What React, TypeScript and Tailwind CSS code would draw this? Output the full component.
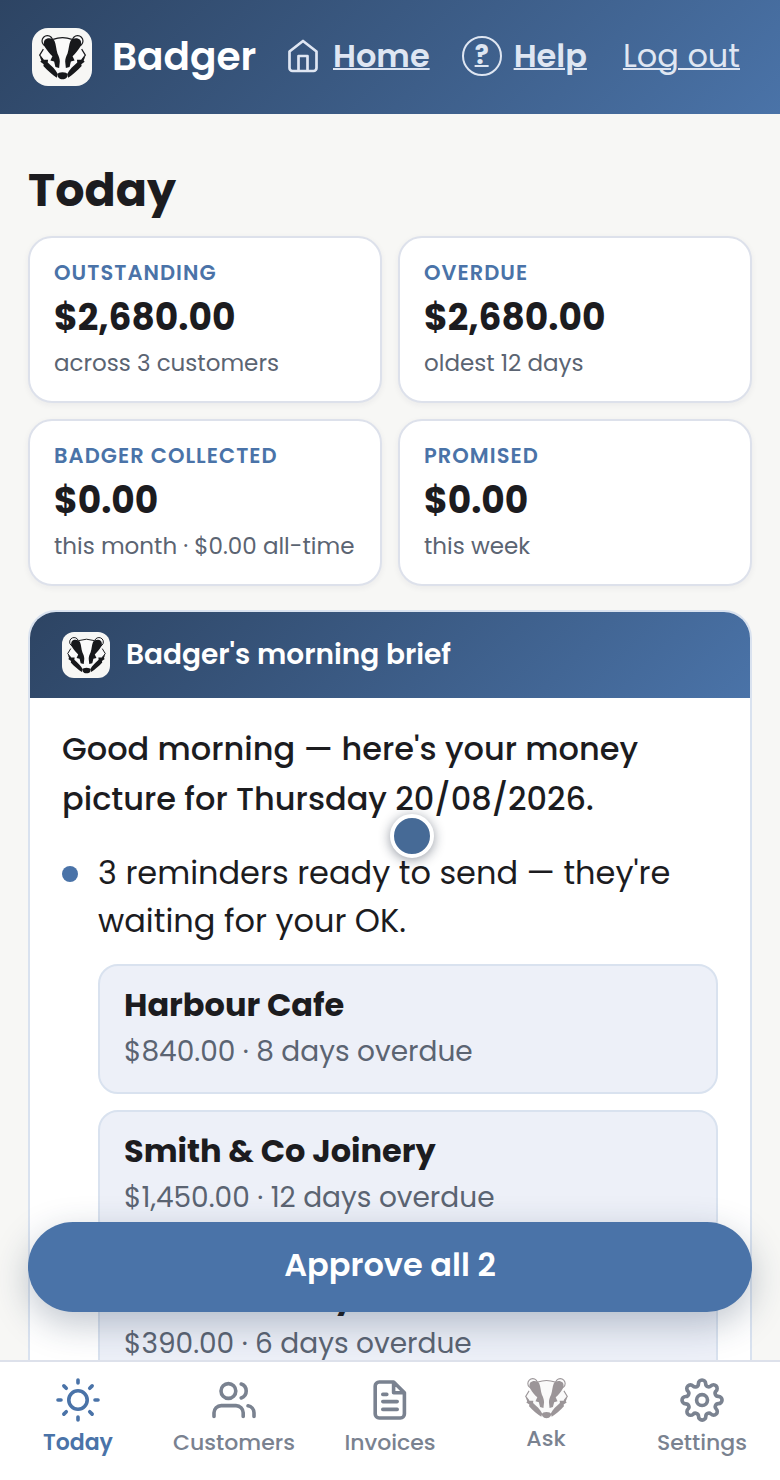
import React from "react";

type IconProps = { className?: string };

function BadgerFace({ className, ink = "#17181b" }: IconProps & { ink?: string }) {
  const half = (
    <>
      <circle cx="25" cy="18" r="16" fill="#fafafa" stroke={ink} strokeWidth="3.5" />
      <path d="M17 15C24 7 40 8 46 17c5 11 5 26 9 38 4 8 7 16 7 24l-2 19-11-3-4-16-11-3 6-13C32 56 24 46 19 38 13 30 13 21 17 15z" fill={ink} />
      <path d="M13 42L2 60l10 13" fill="none" stroke={ink} strokeWidth="3.5" />
      <path d="M2 64l13 10 12 0-1 8c12 11 23 20 30 34l-3 11C42 119 24 105 13 92l1-5-10-7 3-4z" fill={ink} />
    </>
  );
  return (
    <svg viewBox="0 0 140 134" className={className} aria-hidden="true">
      <path d="M13 42L25 18 44 14q26-10 52 0l19 4 12 24 11 18-12 16-46 52h-20L14 76 2 60z" fill="#fafafa" />
      {half}
      <g transform="translate(140 0) scale(-1 1)">{half}</g>
      <path d="M42 13q28-10 56 0" fill="none" stroke={ink} strokeWidth="3.5" />
      <path d="M55 118q2-7 15-7t15 7q1 9-7 12-8 3-16 0-8-4-7-12z" fill={ink} />
    </svg>
  );
}

function Line({ className, children }: IconProps & { children: React.ReactNode }) {
  return (
    <svg viewBox="0 0 24 24" fill="none" stroke="currentColor" strokeWidth="1.8" strokeLinecap="round" strokeLinejoin="round" className={className} aria-hidden="true">
      {children}
    </svg>
  );
}

const navItems = [
  {
    label: "Today",
    icon: (
      <Line className="size-12">
        <circle cx="12" cy="12" r="4.6" />
        <path d="M12 2v1.5M12 20.5V22M2 12h1.5M20.5 12H22M4.93 4.93l1.2 1.2M17.87 17.87l1.2 1.2M4.93 19.07l1.2-1.2M17.87 6.13l1.2-1.2" />
      </Line>
    ),
  },
  {
    label: "Customers",
    icon: (
      <Line className="size-12">
        <circle cx="9.2" cy="7.5" r="3.7" />
        <path d="M2 20.2v-1.8a3.6 3.6 0 0 1 3.6-3.6h7.4a3.6 3.6 0 0 1 3.6 3.6v1.8M15.6 4a3.7 3.7 0 0 1 0 7M19 14.9a3.6 3.6 0 0 1 3 3.5v1.8" />
      </Line>
    ),
  },
  {
    label: "Invoices",
    icon: (
      <Line className="size-12">
        <path d="M13.8 3H6.6a2 2 0 0 0-2 2v14a2 2 0 0 0 2 2h10.6a2 2 0 0 0 2-2V8.4zM13.8 3v5.4h5.4M8.4 9.2h2M8.4 12.8h7.2M8.4 16.7h7.2" />
      </Line>
    ),
  },
  { label: "Ask", icon: <BadgerFace className="h-[41px] w-[43px]" ink="#9b9598" /> },
  {
    label: "Settings",
    icon: (
      <Line className="size-12">
        <g transform="translate(1.1 1.1) scale(0.91)" strokeWidth="2">
          <circle cx="12" cy="12" r="3" />
          <path d="M19.4 15a1.65 1.65 0 0 0 .33 1.82l.06.06a2 2 0 0 1 0 2.83 2 2 0 0 1-2.83 0l-.06-.06a1.65 1.65 0 0 0-1.82-.33 1.65 1.65 0 0 0-1 1.51V21a2 2 0 0 1-2 2 2 2 0 0 1-2-2v-.09A1.65 1.65 0 0 0 9 19.4a1.65 1.65 0 0 0-1.82.33l-.06.06a2 2 0 0 1-2.83 0 2 2 0 0 1 0-2.83l.06-.06a1.65 1.65 0 0 0 .33-1.82 1.65 1.65 0 0 0-1.51-1H3a2 2 0 0 1-2-2 2 2 0 0 1 2-2h.09A1.65 1.65 0 0 0 4.6 9a1.65 1.65 0 0 0-.33-1.82l-.06-.06a2 2 0 0 1 0-2.83 2 2 0 0 1 2.83 0l.06.06a1.65 1.65 0 0 0 1.82.33H9a1.65 1.65 0 0 0 1-1.51V3a2 2 0 0 1 2-2 2 2 0 0 1 2 2v.09a1.65 1.65 0 0 0 1 1.51 1.65 1.65 0 0 0 1.82-.33l.06-.06a2 2 0 0 1 2.83 0 2 2 0 0 1 0 2.83l-.06.06a1.65 1.65 0 0 0-.33 1.82V9a1.65 1.65 0 0 0 1.51 1H21a2 2 0 0 1 2 2 2 2 0 0 1-2 2h-.09a1.65 1.65 0 0 0-1.51 1z" />
        </g>
      </Line>
    ),
  },
];

const stats = [
  { label: "Outstanding", value: "$2,680.00", note: "across 3 customers" },
  { label: "Overdue", value: "$2,680.00", note: "oldest 12 days" },
  { label: "Badger collected", value: "$0.00", note: "this month · $0.00 all-time" },
  { label: "Promised", value: "$0.00", note: "this week" },
];

const reminders = [
  { name: "Harbour Cafe", detail: "$840.00 · 8 days overdue" },
  { name: "Smith & Co Joinery", detail: "$1,450.00 · 12 days overdue" },
  { name: "Ocean Bakery", detail: "$390.00 · 6 days overdue" },
];

export default function App() {
  return (
    <div className="relative flex h-screen flex-col overflow-hidden bg-[#f7f7f5] font-[Poppins,Inter,sans-serif] text-[#1c1c1f]">
      <header className="flex shrink-0 items-center bg-linear-135 from-[#2d4463] to-[#4a73a8] py-7 pr-10 pl-8 text-[32px] leading-[54px] whitespace-nowrap text-[#dfe6f2]">
        <span className="flex h-[58px] w-[60px] shrink-0 items-center justify-center rounded-2xl bg-[#f7f7f5]">
          <BadgerFace className="h-[45px] w-[47px]" />
        </span>
        <span className="ml-5 text-[39px] font-semibold text-white">Badger</span>
        <nav className="ml-auto flex items-center gap-8 pb-0.5">
          <a href="#home" className="flex items-center gap-3 font-semibold">
            <Line className="size-9">
              <path d="M3 9l9-7 9 7v11a2 2 0 0 1-2 2H5a2 2 0 0 1-2-2zM9 22V12h6v10" />
            </Line>
            <span className="underline decoration-2">Home</span>
          </a>
          <a href="#help" className="flex items-center gap-3 font-semibold">
            <span className="flex size-10 items-center justify-center rounded-full border-2 border-[#dfe6f2] pb-0.5 text-[26px] leading-9 font-bold underline decoration-2">?</span>
            <span className="underline decoration-2">Help</span>
          </a>
          <a href="#logout" className="ml-1 underline decoration-2">Log out</a>
        </nav>
      </header>

      <main className="min-h-0 flex-1 overflow-y-auto px-7 pt-11 [scrollbar-width:none]">
        <h1 className="text-[46px] leading-[64px] font-bold">Today</h1>
        <section className="mt-[14px] grid grid-cols-2 gap-4">
          {stats.map((s) => (
            <div key={s.label} className="rounded-3xl border-2 border-[#dde1eb] bg-white px-6 pt-[18px] pb-[21px] shadow-[0_2px_6px_rgba(30,40,60,0.06)]">
              <div className="text-[21px] leading-[34px] font-semibold tracking-wider text-[#4a73a8] uppercase">{s.label}</div>
              <div className="text-[36px] leading-[56px] font-bold">{s.value}</div>
              <div className="text-[23px] leading-[34px] whitespace-nowrap text-[#5b6472]">{s.note}</div>
            </div>
          ))}
        </section>

        <section className="mt-6 rounded-[28px] border-2 border-[#d9e2ef] bg-white">
          <h2 className="flex items-center gap-4 rounded-t-[26px] bg-linear-135 from-[#2d4463] to-[#4a73a8] px-8 py-5 text-[28px] leading-[46px] font-semibold text-white">
            <span className="flex h-[46px] w-12 items-center justify-center rounded-xl bg-[#f7f7f5]">
              <BadgerFace className="h-[37px] w-[39px]" />
            </span>
            Badger's morning brief
          </h2>
          <div className="px-8 pt-[26px] pb-8">
            <p className="text-[32px] leading-[50px] font-medium">Good morning — here's your money picture for Thursday 20/08/2026.</p>
            <div className="mt-[25px] flex gap-5">
              <span className="mt-[17px] size-4 shrink-0 rounded-full bg-[#4a73a8]" />
              <div className="min-w-0 flex-1">
                <p className="text-[32px] leading-[48px]">3 reminders ready to send — they're waiting for your OK.</p>
                <ul className="mt-[19px] flex flex-col gap-4">
                  {reminders.map((r) => (
                    <li key={r.name} className="rounded-[20px] border-2 border-[#d9e2ef] bg-[#edf0f8] px-6 pt-[15px] pb-[18px]">
                      <div className="text-[32px] leading-[48px] font-bold">{r.name}</div>
                      <div className="text-[28px] leading-[45px] text-[#5b6472]">{r.detail}</div>
                    </li>
                  ))}
                </ul>
              </div>
            </div>
          </div>
        </section>
      </main>

      <div className="absolute right-7 bottom-[168px] left-7">
        <button type="button" className="w-full rounded-full bg-[#4a73a8] pt-[19px] pb-[23px] text-[32px] leading-[48px] font-semibold text-white shadow-[0_12px_36px_rgba(30,50,80,0.28)]">
          Approve all 2
        </button>
      </div>

      <span className="absolute top-[814px] left-[390px] size-11 rounded-full border-4 border-white bg-[#466a96] shadow-[0_2px_12px_rgba(20,30,50,0.45)]" />

      <nav className="relative grid shrink-0 grid-cols-5 items-start border-t-2 border-[#dde1eb] bg-white pt-[14px] pb-[18px] text-[22px] leading-[38px] font-medium text-[#7a8290]">
        {navItems.map((item, i) => (
          <a key={item.label} href={"#" + item.label.toLowerCase()} className={i === 0 ? "flex flex-col items-center font-semibold text-[#4a73a8]" : "flex flex-col items-center"}>
            <span className={item.label === "Ask" ? "flex h-11 items-center" : "flex h-12 items-center"}>{item.icon}</span>
            {item.label}
          </a>
        ))}
      </nav>
    </div>
  );
}
